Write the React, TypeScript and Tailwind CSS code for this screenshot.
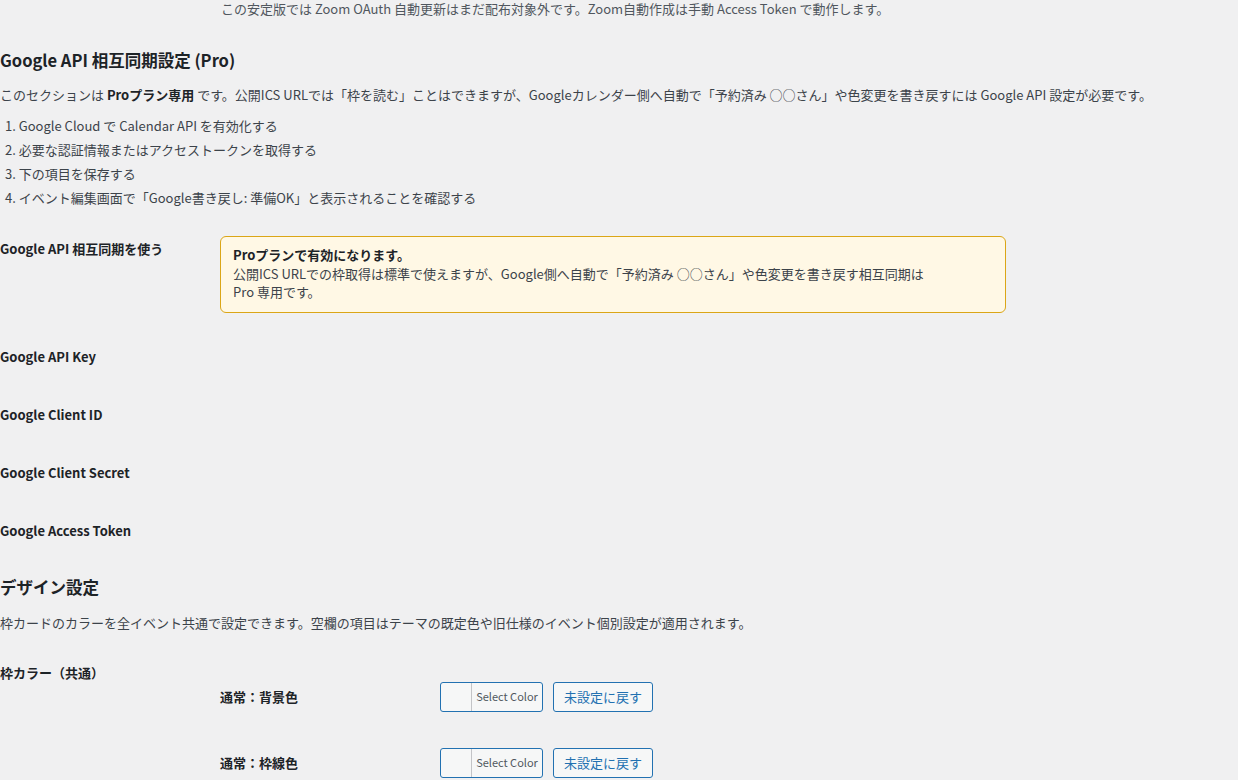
import type { FC } from 'react';

const steps = [
  '1. Google Cloud で Calendar API を有効化する',
  '2. 必要な認証情報またはアクセストークンを取得する',
  '3. 下の項目を保存する',
  '4. イベント編集画面で「Google書き戻し: 準備OK」と表示されることを確認する',
];

const apiFields = ['Google API Key', 'Google Client ID', 'Google Client Secret', 'Google Access Token'];

const ColorRow: FC<{ label: string }> = ({ label }) => (
  <div className="flex items-center">
    <div className="w-[220px] font-bold text-[#1d2327] leading-5">{label}</div>
    <div className="flex items-center gap-[10px]">
      <button className="flex h-[30px] w-[103px] overflow-hidden rounded-[3px] border border-[#2271b1] bg-[#f6f7f7]">
        <span className="h-full w-[30px]" />
        <span className="flex h-full flex-1 items-center justify-center border-l border-[#c3c4c7] text-[11px] text-[#50575e]">
          Select Color
        </span>
      </button>
      <button className="h-[30px] w-[100px] rounded-[3px] border border-[#2271b1] bg-[#f6f7f7] text-[13px] text-[#2271b1]">
        未設定に戻す
      </button>
    </div>
  </div>
);

const App: FC = () => {
  return (
    <div
      className="min-h-screen overflow-hidden bg-[#f0f0f1] text-[13px] text-[#3c434a]"
      style={{ fontFamily: '"Noto Sans CJK JP", "Noto Sans", sans-serif' }}
    >
      <div className="h-[17px] pl-[221px] leading-[17px] text-[#50575e]">
        この安定版では Zoom OAuth 自動更新はまだ配布対象外です。Zoom自動作成は手動 Access Token で動作します。
      </div>

      <h2 className="mt-[32px] text-[16.5px] font-semibold leading-[22px] text-[#1d2327]">
        Google API 相互同期設定 (Pro)
      </h2>
      <p className="mt-[14px] leading-5">
        このセクションは <strong className="text-[#1d2327]">Proプラン専用</strong>{' '}
        です。公開ICS URLでは「枠を読む」ことはできますが、Googleカレンダー側へ自動で「予約済み ○○さん」や色変更を書き戻すには Google API 設定が必要です。
      </p>
      <ol className="mt-[11px] flex flex-col gap-1 pl-[5px] leading-5">
        {steps.map((s) => (
          <li key={s}>{s}</li>
        ))}
      </ol>

      <div className="mt-[28px] flex">
        <div className="w-[220px] pt-[3px] font-bold leading-5 text-[#1d2327]">Google API 相互同期を使う</div>
        <div className="w-[786px] rounded-[6px] border border-[#dba617] bg-[#fff8e5] px-3 pb-[10px] pt-[9px] leading-[18.5px]">
          <div className="font-bold text-[#1d2327]">Proプランで有効になります。</div>
          <div className="whitespace-nowrap">
            公開ICS URLでの枠取得は標準で使えますが、Google側へ自動で「予約済み ○○さん」や色変更を書き戻す相互同期は
            <br />
            Pro 専用です。
          </div>
        </div>
      </div>

      <div className="mt-[34px] flex flex-col gap-[38px]">
        {apiFields.map((f) => (
          <div key={f} className="font-bold leading-5 text-[#1d2327]">
            {f}
          </div>
        ))}
      </div>

      <h2 className="mt-[35px] text-[16.5px] font-semibold leading-[22px] text-[#1d2327]">デザイン設定</h2>
      <p className="mt-[15px] leading-5">
        枠カードのカラーを全イベント共通で設定できます。空欄の項目はテーマの既定色や旧仕様のイベント個別設定が適用されます。
      </p>

      <div className="mt-[30px]">
        <div className="font-bold leading-5 text-[#1d2327]">枠カラー（共通）</div>
        <div className="-mt-px flex flex-col gap-[36px] pl-[220px]">
          <ColorRow label="通常：背景色" />
          <ColorRow label="通常：枠線色" />
        </div>
      </div>
    </div>
  );
};

export default App;
